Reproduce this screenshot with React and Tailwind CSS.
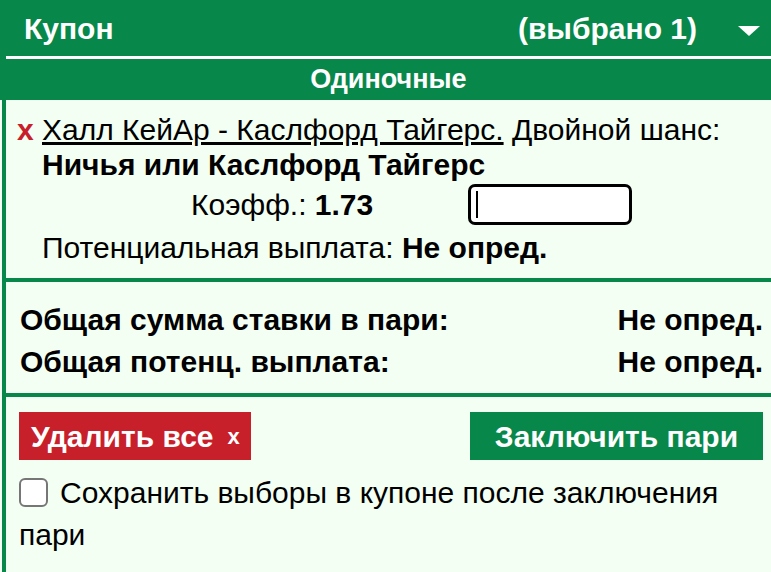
import React from "react";

export default function App() {
   return (
      <div className="w-[771px] h-[572px] overflow-hidden flex flex-col bg-[#f2fff2] font-['Liberation_Sans',Arial,sans-serif] text-black">
         {/* header */}
         <div className="bg-[#07884a] text-white">
            <div className="h-[56px] flex items-center pl-[24px] pr-[11px] text-[30px] font-bold">
               <span>Купон</span>
               <span className="ml-auto">(выбрано 1)</span>
               <svg className="ml-[41px] mt-[6px]" width="22" height="10" viewBox="0 0 22 10">
                  <path d="M0 0 L22 0 L11 10 Z" fill="#fff" />
               </svg>
            </div>
            <div className="h-[3px] ml-[6px] bg-white"></div>
            <div className="h-[41px] flex items-center justify-center pl-[6px] text-[27px] font-bold">
               Одиночные
            </div>
         </div>

         <div className="flex-1 ml-[2px] border-l-4 border-[#07884a]">
            {/* selection */}
            <div className="pt-[12px] pb-[13px] pl-[11px] pr-2 text-[30px] leading-[35px]">
               <div className="flex">
                  <span className="w-[25px] shrink-0 text-[#c8202b] font-bold">x</span>
                  <div>
                     <span className="underline underline-offset-2">Халл КейАр - Каслфорд Тайгерс.</span> Двойной шанс:
                     <div className="font-bold">Ничья или Каслфорд Тайгерс</div>
                  </div>
               </div>
               <div className="flex items-center mt-[2px] pl-[174px]">
                  <span>
                     Коэфф.: <b>1.73</b>
                  </span>
                  <div className="ml-[95px] w-[164px] h-[41px] rounded-[7px] border-[3px] border-black bg-white flex items-center pl-[5px]">
                     <div className="w-[2px] h-[27px] bg-black"></div>
                  </div>
               </div>
               <div className="mt-[5px] pl-[25px]">
                  Потенциальная выплата: <b>Не опред.</b>
               </div>
            </div>

            <div className="h-[4px] bg-[#07884a] -ml-1"></div>

            {/* totals */}
            <div className="pt-[17px] pb-[10px] pl-[14px] pr-[8px] text-[30px] font-bold leading-[42px]">
               <div className="flex justify-between">
                  <span>Общая сумма ставки в пари:</span>
                  <span>Не опред.</span>
               </div>
               <div className="flex justify-between">
                  <span>Общая потенц. выплата:</span>
                  <span>Не опред.</span>
               </div>
            </div>

            <div className="h-[4px] bg-[#07884a] -ml-1"></div>

            {/* actions */}
            <div className="pt-[15px] pl-[13px] pr-[8px]">
               <div className="flex justify-between">
                  <button className="h-[48px] w-[232px] bg-[#c8202b] text-white font-bold text-[30px] flex items-center pl-[12px]">
                     Удалить все <span className="ml-[14px] text-[22px]">x</span>
                  </button>
                  <button className="h-[48px] w-[293px] bg-[#07884a] text-white font-bold text-[30px] flex items-center justify-center">
                     Заключить пари
                  </button>
               </div>
               <div className="mt-[12px] text-[30px] leading-[42px]">
                  <span className="inline-block align-[-4px] w-[29px] h-[29px] rounded-[6px] border-2 border-[#767676] bg-white mr-[12px]"></span>
                  Сохранить выборы в купоне после заключения пари
               </div>
            </div>
         </div>
      </div>
   );
}
